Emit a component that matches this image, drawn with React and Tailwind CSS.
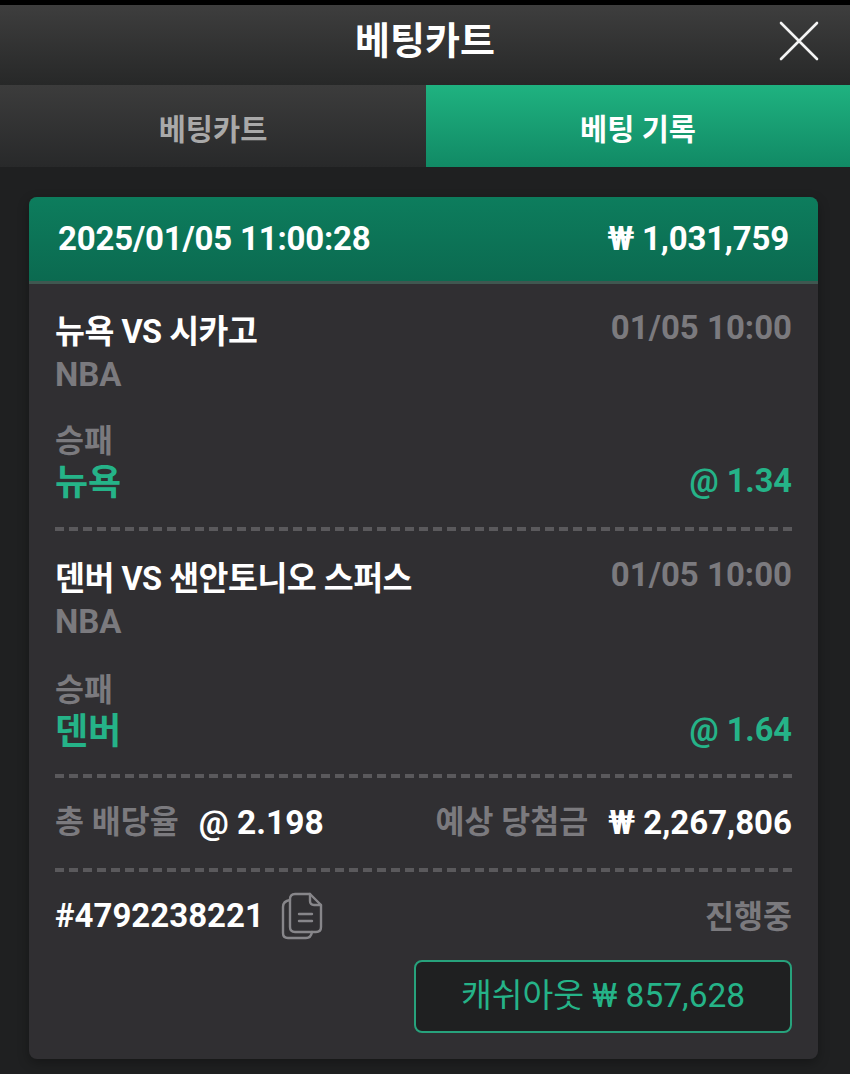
const bets = [
  { match: '뉴욕 VS 시카고', time: '01/05 10:00', league: 'NBA', market: '승패', pick: '뉴욕', odds: '@ 1.34', gap: 'mt-[27px]' },
  { match: '덴버 VS 샌안토니오 스퍼스', time: '01/05 10:00', league: 'NBA', market: '승패', pick: '덴버', odds: '@ 1.64', gap: 'mt-[29px]' },
]

function Dashed() {
  return <div className="h-[4px] bg-[repeating-linear-gradient(90deg,#5a595c_0,#5a595c_9px,transparent_9px,transparent_14px)]" />
}

function CopyIcon() {
  return (
    <svg width="42" height="48" viewBox="0 0 42 48" fill="none" stroke="#87868a" strokeWidth="2.4" strokeLinejoin="round" strokeLinecap="round">
      <path d="M9 7 Q9 2 14 2 H29 L40 13 V35 Q40 40 35 40 H14 Q9 40 9 35 Z" />
      <path d="M29 2 V9 Q29 13 33 13 H40" />
      <path d="M9 8 Q2 9 2 15 V41 Q2 46 7 46 H25 Q30 46 31 40" />
      <path d="M18 22 H31 M18 29 H31" />
    </svg>
  )
}

function BetRow({ bet }) {
  return (
    <div className="h-[243px] flex flex-col">
      <div className="flex justify-between items-start pt-[28px]">
        <div className="text-[32.5px] leading-[40px] font-bold text-white tracking-[-0.5px]">{bet.match}</div>
        <div className="text-[33px] leading-[40px] mt-[-4px] font-bold text-[#7b7a7e]">{bet.time}</div>
      </div>
      <div className="text-[33px] leading-[40px] mt-[3px] font-bold text-[#7b7a7e]">{bet.league}</div>
      <div className={`text-[31.5px] leading-[40px] ${bet.gap} font-bold text-[#7b7a7e]`}>{bet.market}</div>
      <div className="flex justify-between items-start mt-[-1px]">
        <div className="text-[36px] leading-[44px] font-bold text-[#25b388]">{bet.pick}</div>
        <div className="text-[32.5px] leading-[40px] font-bold text-[#25b388]">{bet.odds}</div>
      </div>
    </div>
  )
}

export default function App() {
  return (
    <div className="w-[850px] h-[1074px] overflow-hidden bg-[#1f2021] font-['Roboto','Noto_Sans_CJK_KR',sans-serif]">
      <div className="h-[5px] bg-black" />
      <div className="relative h-[80px] pb-[8px] flex items-center justify-center bg-gradient-to-b from-[#3e3e3e] to-[#272828]">
        <div className="text-[38px] font-bold text-white">베팅카트</div>
        <svg className="absolute right-[31px] top-[16px]" width="40" height="40" viewBox="0 0 40 40" stroke="#f4f4f4" strokeWidth="2.6" strokeLinecap="round">
          <path d="M2 2 L38 38 M38 2 L2 38" />
        </svg>
      </div>
      <div className="h-[82px] flex">
        <div className="w-[426px] pt-[9px] flex items-center justify-center bg-gradient-to-b from-[#3c3c3c] to-[#28292a] text-[29.5px] font-bold text-[#a9a9a9]">베팅카트</div>
        <div className="w-[424px] pt-[9px] flex items-center justify-center bg-gradient-to-b from-[#1fb280] to-[#118a65] text-[29.5px] font-bold text-white">베팅 기록</div>
      </div>
      <div className="mx-[29px] mt-[30px] w-[789px] h-[862px] rounded-lg overflow-hidden bg-[#302f32] shadow-[0_4px_12px_rgba(0,0,0,0.3)]">
        <div className="h-[87px] px-[29px] flex items-center justify-between bg-gradient-to-b from-[#0d7d5d] to-[#0b6a50] border-b-[3px] border-[#3f5750] text-[33px] font-bold text-white tracking-[-0.2px]">
          <div>2025/01/05 11:00:28</div>
          <div>₩ 1,031,759</div>
        </div>
        <div className="px-[26px]">
          <BetRow bet={bets[0]} />
          <Dashed />
          <BetRow bet={bets[1]} />
          <Dashed />
          <div className="h-[90px] flex items-center justify-between">
            <div className="flex items-center gap-[20px]">
              <span className="text-[31.5px] font-bold text-[#7b7a7e]">총 배당율</span>
              <span className="text-[33.5px] font-bold text-white">@ 2.198</span>
            </div>
            <div className="flex items-center gap-[20px]">
              <span className="text-[31.5px] font-bold text-[#7b7a7e]">예상 당첨금</span>
              <span className="text-[33px] font-bold text-white">₩ 2,267,806</span>
            </div>
          </div>
          <Dashed />
          <div className="h-[88px] flex items-center justify-between">
            <div className="flex items-center gap-[17px]">
              <span className="text-[33px] font-bold text-white">#4792238221</span>
              <CopyIcon />
            </div>
            <span className="text-[31.5px] pt-[3px] font-bold text-[#7b7a7e]">진행중</span>
          </div>
          <div className="flex justify-end">
            <div className="w-[378px] h-[73px] flex items-center justify-center rounded-lg border-2 border-[#27a27c] bg-[#1f2021] text-[33.5px] text-[#25b388]">캐쉬아웃 ₩ 857,628</div>
          </div>
        </div>
      </div>
    </div>
  )
}
